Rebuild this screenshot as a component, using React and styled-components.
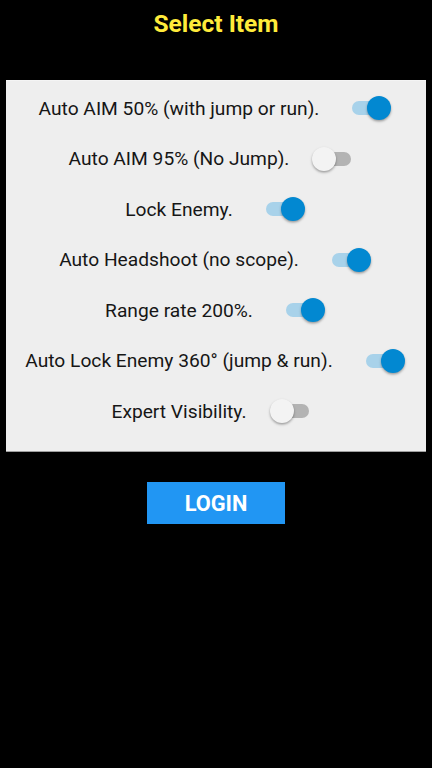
import React from "react";
import styled, { createGlobalStyle } from "styled-components";

const Global = createGlobalStyle`
  html, body { margin: 0; padding: 0; background: #000; }
  body { font-family: Roboto, "Noto Sans", Arial, sans-serif; }
  #root { min-height: 768px; background: #000; }
`;

const Page = styled.div`
  width: 432px;
  min-height: 768px;
  background: #000;
  display: flex;
  flex-direction: column;
  align-items: center;
`;

const Title = styled.h1`
  margin: 0;
  height: 46px;
  display: flex;
  align-items: center;
  justify-content: center;
  color: #ffeb3b;
  font-family: Roboto, sans-serif;
  font-weight: 700;
  font-size: 24.5px;
`;

const Panel = styled.div`
  margin-top: 34px;
  width: 420px;
  height: 372px;
  box-sizing: border-box;
  background: #eeeeee;
  border-top: 1px solid #f4f4f4;
  border-bottom: 1px solid #9e9e9e;
  padding-top: 2px;
  padding-right: 2px;
  display: flex;
  flex-direction: column;
`;

const Row = styled.label`
  height: 50.5px;
  display: flex;
  align-items: center;
  justify-content: center;
  gap: 23px;
`;

const Label = styled.span`
  font-family: Roboto, sans-serif;
  font-size: 19.2px;
  font-weight: 400;
  color: #161616;
`;

const SwitchBox = styled.span`
  position: relative;
  width: 49px;
  height: 24px;
  flex: none;
`;

const Track = styled.span`
  position: absolute;
  left: 10px;
  right: 10px;
  top: 5px;
  height: 14px;
  border-radius: 7px;
  background: ${(p) => (p.$on ? "#a8d2ea" : "#b3b3b3")};
`;

const Thumb = styled.span`
  position: absolute;
  top: 0;
  ${(p) => (p.$on ? "right: 0;" : "left: 0;")}
  width: 24px;
  height: 24px;
  border-radius: 50%;
  background: ${(p) => (p.$on ? "#0288d1" : "#f3f3f3")};
  box-shadow: 0 1.5px 2.5px rgba(0, 0, 0, 0.35);
`;

const Button = styled.button`
  margin-top: 30px;
  width: 138px;
  height: 42px;
  border: none;
  background: #2196f3;
  color: #fff;
  font-family: Roboto, sans-serif;
  font-weight: 700;
  font-size: 21.8px;
  padding: 0;
  cursor: pointer;
`;

const Switch = ({ on }) => (
  <SwitchBox>
    <Track $on={on} />
    <Thumb $on={on} />
  </SwitchBox>
);

const items = [
  ["Auto AIM 50% (with jump or run).", true],
  ["Auto AIM 95% (No Jump).", false],
  ["Lock Enemy.", true],
  ["Auto Headshoot (no scope).", true],
  ["Range rate 200%.", true],
  ["Auto Lock Enemy 360° (jump & run).", true],
  ["Expert Visibility.", false],
];

export default function App() {
  return (
    <>
      <Global />
      <Page>
        <Title>Select Item</Title>
        <Panel>
          {items.map(([t, on]) => (
            <Row key={t}>
              <Label>{t}</Label>
              <Switch on={on} />
            </Row>
          ))}
        </Panel>
        <Button>LOGIN</Button>
      </Page>
    </>
  );
}
